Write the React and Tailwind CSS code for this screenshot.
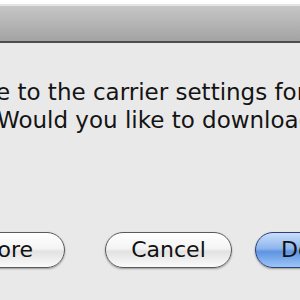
const font = { fontFamily: '"DejaVu Sans", "Liberation Sans", sans-serif' };

const AquaButton = ({ children, primary = false, className = "" }) => (
  <div
    className={`flex h-[36px] shrink-0 items-center rounded-full border-[1.5px] text-[22px] leading-none text-[#111] shadow-[0_1px_2px_rgba(0,0,0,0.35)] ${
      primary
        ? "border-[#2b3f7a] bg-[linear-gradient(to_bottom,#c9defa_0%,#8fb6ee_45%,#5f93e3_55%,#9cc6f6_100%)]"
        : "border-[#5a5a5a] bg-[linear-gradient(to_bottom,#ffffff_0%,#f4f4f4_45%,#e2e2e2_55%,#fbfbfb_100%)]"
    } ${className}`}
  >
    {children}
  </div>
);

export default function App() {
  return (
    <div className="h-[300px] w-[300px] overflow-hidden bg-[#e9e9e9]" style={font}>
      {/* window title, cut off at the top */}
      <div className="h-[4px] overflow-hidden bg-white">
        <div className="-mt-[14px] pl-[2px] text-[16px] leading-[18px] text-black">r Exhibit</div>
      </div>
      <div className="h-[2px] bg-[#e4e4e4]" />
      {/* toolbar */}
      <div className="h-[35px] bg-[linear-gradient(to_bottom,#c6c6c6,#a3a3a3)]" />
      <div className="h-[2px] bg-[#4d4d4d]" />

      {/* message */}
      <div className="mt-[35px] overflow-hidden whitespace-nowrap text-[23px] leading-[28px] text-[#141414]">
        <div className="-ml-[4px]">e to the carrier settings for your iPhone</div>
        <div className="-ml-[3px]">Would you like to download it now?</div>
      </div>

      {/* buttons */}
      <div className="mt-[98px] flex items-center">
        <AquaButton className="-ml-[40px] w-[105px] justify-end pr-[31px]">More</AquaButton>
        <AquaButton className="ml-[40px] w-[127px] justify-center">Cancel</AquaButton>
        <AquaButton primary className="ml-[23px] w-[120px] pl-[25px]">Download</AquaButton>
      </div>
    </div>
  );
}
